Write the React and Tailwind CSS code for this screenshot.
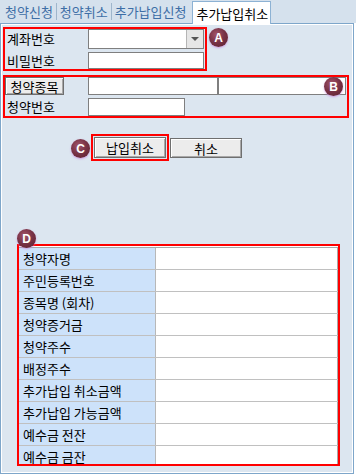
import React from 'react';

// numbered annotation marker (overlay)
const Badge = ({ letter, className }) => (
  <div
    className={`absolute w-[19px] h-[19px] rounded-full flex items-center justify-center text-white text-[12px] font-bold bg-[radial-gradient(circle_at_40%_35%,#a3566a_0%,#7a3347_45%,#5a1d2c_100%)] shadow-[0_1px_2px_rgba(200,120,220,0.7)] ${className}`}
    style={{ fontFamily: '"Liberation Sans", Arial, sans-serif' }}
  >
    {letter}
  </div>
);

const Btn = ({ children, className = '' }) => (
  <button className={`bg-[#ececec] border border-[#6f6f6f] shadow-[inset_1px_1px_0_#ffffff,inset_-1px_-1px_0_#a8a8a8] flex items-center justify-center text-[13px] text-black leading-none ${className}`}>
    {children}
  </button>
);

const Field = ({ className = '' }) => (
  <div className={`bg-white border border-[#7f7f7f] ${className}`} />
);

const rows = [
  '청약자명',
  '주민등록번호',
  '종목명 (회차)',
  '청약증거금',
  '청약주수',
  '배정주수',
  '추가납입 취소금액',
  '추가납입 가능금액',
  '예수금 전잔',
  '예수금 금잔',
];

const tabs = ['청약신청', '청약취소', '추가납입신청'];

export default function App() {
  return (
    <div
      className="relative w-[356px] h-[475px] bg-white overflow-hidden text-[13px] text-black"
      style={{ fontFamily: '"Noto Sans CJK KR", "Noto Sans", sans-serif' }}
    >
      {/* tab strip */}
      <div className="flex items-start h-[23px] bg-[#d5e1ed] relative z-10">
        {tabs.map((t, i) => (
          <React.Fragment key={t}>
            <div className={`h-[23px] flex items-center text-[#3d6ea6] leading-none ${i === 0 ? 'pl-[5px]' : 'pl-[3px]'} pr-[3px]`}>
              {t}
            </div>
            {i < 2 && <div className="w-[1px] h-[17px] mt-[3px] bg-[#9fb6cc]" />}
          </React.Fragment>
        ))}
        <div className="ml-[3px] mt-[1px] h-[23px] bg-white border border-b-0 border-[#8db2d4] flex items-center pl-[3px] pr-[2px] leading-none">
          추가납입취소
        </div>
      </div>

      {/* panel */}
      <div className="w-[354px] h-[451px] border border-[#7ea6ca]">
        <div className="h-full border border-white bg-[#dce6f0]">
          {/* A: account */}
          <div className="ml-[1px] mt-[2px] w-[204px] h-[44px] border-2 border-[#ff0000] flex flex-col">
            <div className="flex items-center h-[20px]">
              <div className="w-[83px] pl-[2px]">계좌번호</div>
              <div className="w-[116px] h-[20px] bg-white border border-[#7f7f7f] flex justify-end">
                <div className="w-[17px] h-full bg-[#e6e6e6] border-l border-[#b5b5b5] flex items-center justify-center">
                  <div className="w-0 h-0 border-l-[4px] border-r-[4px] border-t-[4px] border-l-transparent border-r-transparent border-t-[#555]" />
                </div>
              </div>
            </div>
            <div className="flex items-center h-[17px] mt-[3px]">
              <div className="w-[83px] pl-[2px]">비밀번호</div>
              <Field className="w-[116px] h-[17px]" />
            </div>
          </div>

          {/* B: product */}
          <div className="ml-[1px] mt-[4px] w-[346px] h-[43px] border-2 border-[#ff0000] flex flex-col">
            <div className="flex items-center h-[18px]">
              <Btn className="w-[59px] h-[18px]">청약종목</Btn>
              <Field className="ml-[24px] w-[130px] h-[18px]" />
              <Field className="w-[128px] h-[18px]" />
            </div>
            <div className="flex items-center h-[18px] mt-[3px]">
              <div className="w-[83px] pl-[2px]">청약번호</div>
              <Field className="w-[97px] h-[18px]" />
            </div>
          </div>

          {/* C: actions */}
          <div className="flex items-start ml-[89px] mt-[16px]">
            <div className="w-[78px] h-[27px] border-2 border-[#ff0000] flex items-center justify-center">
              <Btn className="w-[72px] h-[21px]">납입취소</Btn>
            </div>
            <Btn className="ml-[1px] mt-[4px] w-[72px] h-[20px]">취소</Btn>
          </div>

          {/* D: result table */}
          <div className="ml-[15px] mt-[83px] w-[323px] h-[222px] border-2 border-[#ff0000] overflow-hidden bg-white">
            <div className="mt-[1px] border-t border-[#a8a8a8]">
              {rows.map((r) => (
                <div key={r} className="flex h-[22px] border-b border-[#c0c0c0]">
                  <div className="w-[137px] bg-[#cde2fa] border-r border-[#b8b8b8] pl-[4px] flex items-center whitespace-pre">
                    {r}
                  </div>
                  <div className="flex-1 bg-white border-r border-[#a8a8a8]" />
                </div>
              ))}
            </div>
          </div>
        </div>
      </div>

      <Badge letter="A" className="left-[209px] top-[28px]" />
      <Badge letter="B" className="left-[324px] top-[77px]" />
      <Badge letter="C" className="left-[71px] top-[139px]" />
      <Badge letter="D" className="left-[17px] top-[229px]" />
    </div>
  );
}
